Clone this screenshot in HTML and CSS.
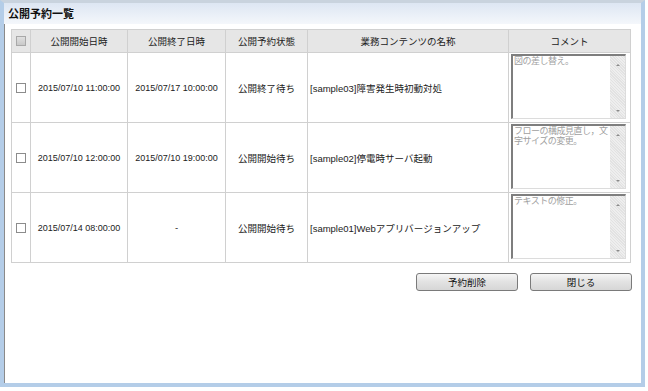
FILE: index.html
```html
<html>
  <head>
    <title>公開予約一覧</title>
    <link rel="stylesheet" href="styles.css">
  </head>
  <body>
    <div class="window">
      <div class="titlebar">公開予約一覧</div>
      <div class="content">
        <table class="list">
          <colgroup>
            <col class="w-chk"><col class="w-start"><col class="w-end"><col class="w-state"><col class="w-name"><col class="w-comment">
          </colgroup>
          <thead>
            <tr>
              <th><span class="check check-head"></span></th>
              <th>公開開始日時</th>
              <th>公開終了日時</th>
              <th>公開予約状態</th>
              <th>業務コンテンツの名称</th>
              <th>コメント</th>
            </tr>
          </thead>
          <tbody>
            <tr>
              <td class="c"><span class="check"></span></td>
              <td class="c num">2015/07/10 11:00:00</td>
              <td class="c num">2015/07/17 10:00:00</td>
              <td class="c">公開終了待ち</td>
              <td>[sample03]障害発生時初動対処</td>
              <td class="memo-cell">
                <div class="memo">
                  <div class="memo-text">図の差し替え。</div>
                  <div class="scroll"><span class="up"></span><span class="down"></span></div>
                </div>
              </td>
            </tr>
            <tr>
              <td class="c"><span class="check"></span></td>
              <td class="c num">2015/07/10 12:00:00</td>
              <td class="c num">2015/07/10 19:00:00</td>
              <td class="c">公開開始待ち</td>
              <td>[sample02]停電時サーバ起動</td>
              <td class="memo-cell">
                <div class="memo">
                  <div class="memo-text">フローの構成見直し，文字サイズの変更。</div>
                  <div class="scroll"><span class="up"></span><span class="down"></span></div>
                </div>
              </td>
            </tr>
            <tr>
              <td class="c"><span class="check"></span></td>
              <td class="c num">2015/07/14 08:00:00</td>
              <td class="c">-</td>
              <td class="c">公開開始待ち</td>
              <td>[sample01]Webアプリバージョンアップ</td>
              <td class="memo-cell">
                <div class="memo">
                  <div class="memo-text">テキストの修正。</div>
                  <div class="scroll"><span class="up"></span><span class="down"></span></div>
                </div>
              </td>
            </tr>
          </tbody>
        </table>
        <div class="actions">
          <button class="btn">予約削除</button>
          <button class="btn">閉じる</button>
        </div>
      </div>
    </div>
  </body>
</html>
```

FILE: styles.css
```css
body {
  margin: 0;
  padding: 0;
  background: #ffffff;
  font-family: "Liberation Sans", "Noto Sans CJK JP", sans-serif;
  font-size: 10px;
  color: #222222;
}
.window {
  box-sizing: border-box;
  width: 645px;
  height: 387px;
  border-left: 4px solid #b4cde8;
  border-right: 4px solid #b4cde8;
  border-bottom: 4px solid #b4cde8;
  border-top: 3px solid #c9d3de;
  background: #ffffff;
  box-shadow: inset 1px 0 0 #8a8a8a;
}
.titlebar {
  height: 21px;
  line-height: 20px;
  padding-left: 4px;
  font-family: "Noto Sans CJK JP", sans-serif;
  font-weight: bold;
  font-size: 11px;
  color: #111111;
  background: linear-gradient(#dde6f3, #f4f7fb);
}
.content {
  padding: 5px 0 0 7px;
}
.list {
  border-collapse: collapse;
  table-layout: fixed;
  width: 619px;
}
.w-chk { width: 19px; }
.w-start { width: 97px; }
.w-end { width: 98px; }
.w-state { width: 82px; }
.w-name { width: 201px; }
.w-comment { width: 122px; }
.list th,
.list td {
  border: 1px solid #d0d0d0;
  padding: 0;
}
.list th {
  height: 23px;
  background: #e6e6e6;
  font-family: "Noto Sans CJK JP", sans-serif;
  font-weight: normal;
  font-size: 9.5px;
  color: #222222;
}
.list td {
  height: 70px;
  font-size: 9.5px;
  padding-left: 2px;
}
.list td.c {
  text-align: center;
  padding-left: 0;
}
.num {
  font-size: 9px !important;
}
.check {
  display: inline-block;
  width: 8px;
  height: 8px;
  border: 1px solid #8c8c8c;
  background: #ffffff;
  vertical-align: middle;
}
.check-head {
  background: linear-gradient(#e0e0e0, #c8c8c8);
  border-color: #a8a8a8;
}
.memo-cell {
  vertical-align: top;
  padding: 1px 0 0 2px !important;
}
.memo {
  display: flex;
  box-sizing: border-box;
  width: 115px;
  height: 65px;
  border-style: solid;
  border-width: 2px 1px 1px 2px;
  border-color: #7e7e7e #dcdcdc #dcdcdc #7e7e7e;
  background: #ffffff;
}
.memo-text {
  flex: 1;
  padding: 0 1px;
  font-family: "Noto Sans CJK JP", sans-serif;
  font-size: 9px;
  line-height: 10px;
  letter-spacing: -0.5px;
  color: #a0a0a0;
}
.scroll {
  width: 15px;
  display: flex;
  flex-direction: column;
  justify-content: space-between;
  align-items: center;
  padding: 8px 0 6px;
  box-sizing: border-box;
  background: repeating-linear-gradient(45deg, #eeeeee 0 1px, #e2e2e2 1px 2px);
}
.up,
.down {
  width: 0;
  height: 0;
  border-left: 2px solid transparent;
  border-right: 2px solid transparent;
}
.up { border-bottom: 2px solid #8a8a8a; }
.down { border-top: 2px solid #8a8a8a; }
.actions {
  display: flex;
  justify-content: flex-end;
  gap: 12px;
  width: 621px;
  margin-top: 10px;
}
.btn {
  width: 102px;
  height: 18px;
  padding: 0;
  border: 1px solid #7a7a7a;
  border-radius: 3px;
  background: linear-gradient(#f6f6f6, #e2e2e2 50%, #d6d6d6);
  font-family: "Noto Sans CJK JP", sans-serif;
  font-size: 9.5px;
  color: #111111;
}
```
